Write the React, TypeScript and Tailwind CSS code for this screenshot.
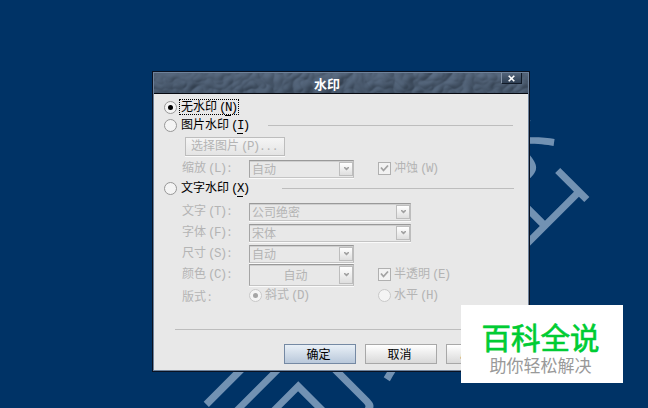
import React from "react";

const Key = ({ k, underline = false }: { k: string; underline?: boolean }) => (
  <span className="ml-[2px] font-['Liberation_Mono',monospace] text-[12.5px] tracking-[-1.6px]">
    (<span className={underline ? "border-b border-black" : ""}>{k}</span>)
  </span>
);

const Radio = ({ checked = false, disabled = false }: { checked?: boolean; disabled?: boolean }) => (
  <span
    className={`flex size-[13px] shrink-0 items-center justify-center rounded-full border bg-[#f4f4f4] ${
      disabled ? "border-[#c9c9c9]" : "border-[#979797]"
    }`}
  >
    {checked && <span className={`size-[5px] rounded-full ${disabled ? "bg-[#a5a5a5]" : "bg-black"}`} />}
  </span>
);

const Check = () => (
  <span className="flex size-[13px] shrink-0 items-center justify-center border border-[#b0b0b0] bg-[#f2f2f2]">
    <svg width="9" height="9" viewBox="0 0 9 9" fill="none">
      <path d="M1 3.5L3.5 6.5L8 1.5" stroke="#a2a2a2" strokeWidth="1.8" />
    </svg>
  </span>
);

const Select = ({ value, className }: { value: string; className: string }) => (
  <div className={`flex shrink-0 items-center border border-t-[#999] border-l-[#a5a5a5] border-r-[#bcbcbc] border-b-[#c4c4c4] shadow-[0_1px_0_#fafafa,inset_0_1px_0_#cfcfcf] ${className}`}>
    <span className="flex-1 pl-0.5">{value}</span>
    <span className="my-px flex w-[14px] items-center justify-center self-stretch border border-[#bdbdbd] bg-linear-to-b from-white to-[#dedede]">
      <svg width="5" height="4" viewBox="0 0 5 4" fill="#a0a0a0">
        <path d="M0 0H1L2.5 1L4 0H5V1L2.5 3.5L0 1Z" />
      </svg>
    </span>
  </div>
);

const Field = ({ label, k, children }: { label: string; k?: string; children: React.ReactNode }) => (
  <div className="flex h-[21px] items-center pl-[28px]">
    <span className="w-[67px] shrink-0">
      {label}
      {k ? <Key k={k} /> : null}
      <span className="ml-0.5">:</span>
    </span>
    {children}
  </div>
);

const Rule = ({ className }: { className: string }) => (
  <span className={`h-px bg-[#bdbdbd] ${className}`} />
);

const TitleBar = () => (
  <div className="relative flex h-[21px] shrink-0 items-center justify-center border-b border-[#05080f] bg-linear-to-b from-[#4a5c73] to-[#3a4c62]">
    {/* embossed texture */}
    <svg className="absolute inset-0" width="100%" height="20">
      <filter id="emboss" x="0" y="0" width="100%" height="100%" colorInterpolationFilters="sRGB">
        <feTurbulence type="turbulence" baseFrequency="0.05 0.06" numOctaves="2" seed="8" result="noise" />
        <feDiffuseLighting in="noise" surfaceScale="2.5" lightingColor="#8799b0">
          <feDistantLight azimuth="225" elevation="42" />
        </feDiffuseLighting>
      </filter>
      <rect width="100%" height="20" filter="url(#emboss)" opacity="0.36" />
    </svg>
    <span className="relative mr-7 text-[13px] font-bold text-white">水印</span>
    <button className="absolute top-0 right-[6px] flex h-[11px] w-[21px] items-center justify-center border border-t-0 border-[#8594a7] border-r-[#111a27] border-b-[#111a27] bg-linear-to-b from-[#53647a] to-[#2f3f53]">
      <svg width="7" height="7" viewBox="0 0 7 7" stroke="#fff" strokeWidth="1.6">
        <path d="M0.7 0.7L6.3 6.3M6.3 0.7L0.7 6.3" />
      </svg>
    </button>
  </div>
);

export default function App() {
  return (
    <div className="relative h-[408px] w-[648px] overflow-hidden bg-[#003366] font-['Noto_Sans_CJK_SC',sans-serif] text-xs leading-none">
      <div className="absolute top-[340px] left-[337px] -translate-x-1/2 -translate-y-1/2 -rotate-45 text-[152px] font-light whitespace-nowrap text-[#7292b3]">
        公司绝密
      </div>

      {/* Watermark dialog */}
      <div className="absolute top-[71px] left-[152px] flex h-[301px] w-[378px] flex-col border border-[#0a1222] bg-[#e8e8e8]">
        <div className="flex min-h-0 flex-1 flex-col border border-[#6f839c]">
          <TitleBar />
          <div className="flex flex-1 flex-col pt-1 text-[#b4b4b4]">
            <div className="flex h-[18px] items-center pl-[10px] text-black">
              <Radio checked />
              <span className="ml-[2px] border border-dotted border-black px-px">
                无水印
                <Key k="N" underline />
              </span>
            </div>
            <div className="flex h-[18px] items-center pl-[10px] text-black">
              <Radio />
              <span className="ml-1 w-[87px]">
                图片水印
                <Key k="I" underline />
              </span>
              <Rule className="w-[245px]" />
            </div>
            <div className="flex h-6 items-center pl-[31px]">
              <button className="h-[19px] w-[100px] border border-[#bdbdbd] bg-linear-to-b from-[#f5f5f5] to-[#e4e4e4] pl-[5px] text-left shadow-[0_1px_0_#fafafa]">
                选择图片
                <Key k="P" />
                <span className="ml-0.5 tracking-[3px]">...</span>
              </button>
            </div>
            <Field label="缩放" k="L">
              <Select value="自动" className="h-[18px] w-[105px]" />
              <span className="ml-6 flex items-center gap-[3px]">
                <Check />
                <span>冲蚀<Key k="W" /></span>
              </span>
            </Field>
            <div className="flex h-[18px] items-center pl-[10px] text-black">
              <Radio />
              <span className="ml-1 w-[101px]">
                文字水印
                <Key k="X" underline />
              </span>
              <Rule className="w-[232px]" />
            </div>
            <div className="mt-1 flex flex-col">
              <Field label="文字" k="T">
                <Select value="公司绝密" className="h-[18px] w-[162px]" />
              </Field>
              <Field label="字体" k="F">
                <Select value="宋体" className="h-[18px] w-[162px]" />
              </Field>
              <Field label="尺寸" k="S">
                <Select value="自动" className="h-[18px] w-[105px]" />
              </Field>
              <Field label="颜色" k="C">
                <Select value="自动" className="h-[22px] w-[105px] text-center" />
                <span className="ml-6 flex items-center gap-[3px]">
                  <Check />
                  <span>半透明<Key k="E" /></span>
                </span>
              </Field>
              <Field label="版式">
                <span className="flex w-[129px] items-center gap-[3px]">
                  <Radio checked disabled />
                  <span>斜式<Key k="D" /></span>
                </span>
                <span className="flex items-center gap-[3px]">
                  <Radio disabled />
                  <span>水平<Key k="H" /></span>
                </span>
              </Field>
            </div>
            <Rule className="mr-[14px] mt-[23px] ml-[21px]" />
            <div className="mt-[14px] flex gap-[9px] pl-[130px] text-black">
              <button className="h-5 w-[72px] border border-[#7589a3] bg-linear-to-b from-[#e9f0f7] to-[#b9c8da] pr-[3px]">确定</button>
              <button className="h-5 w-[72px] border border-[#a8a8a8] bg-linear-to-b from-white to-[#d9d9d9] pr-[3px]">取消</button>
              <button className="h-5 w-[72px] border border-[#a8a8a8] bg-linear-to-b from-white to-[#d9d9d9]">
                应用<Key k="A" underline />
              </button>
            </div>
          </div>
        </div>
      </div>

      <div className="absolute top-[305px] left-[461px] flex h-[78px] w-[162px] flex-col items-center bg-white pt-[16px] pr-[3px]">
        <div className="text-[29.5px] leading-[30px] text-[#0c3] [-webkit-text-stroke:0.7px_#0c3]">百科全说</div>
        <div className="mt-[5px] text-[17px] leading-[18px] text-[#999]">助你轻松解决</div>
      </div>
    </div>
  );
}
